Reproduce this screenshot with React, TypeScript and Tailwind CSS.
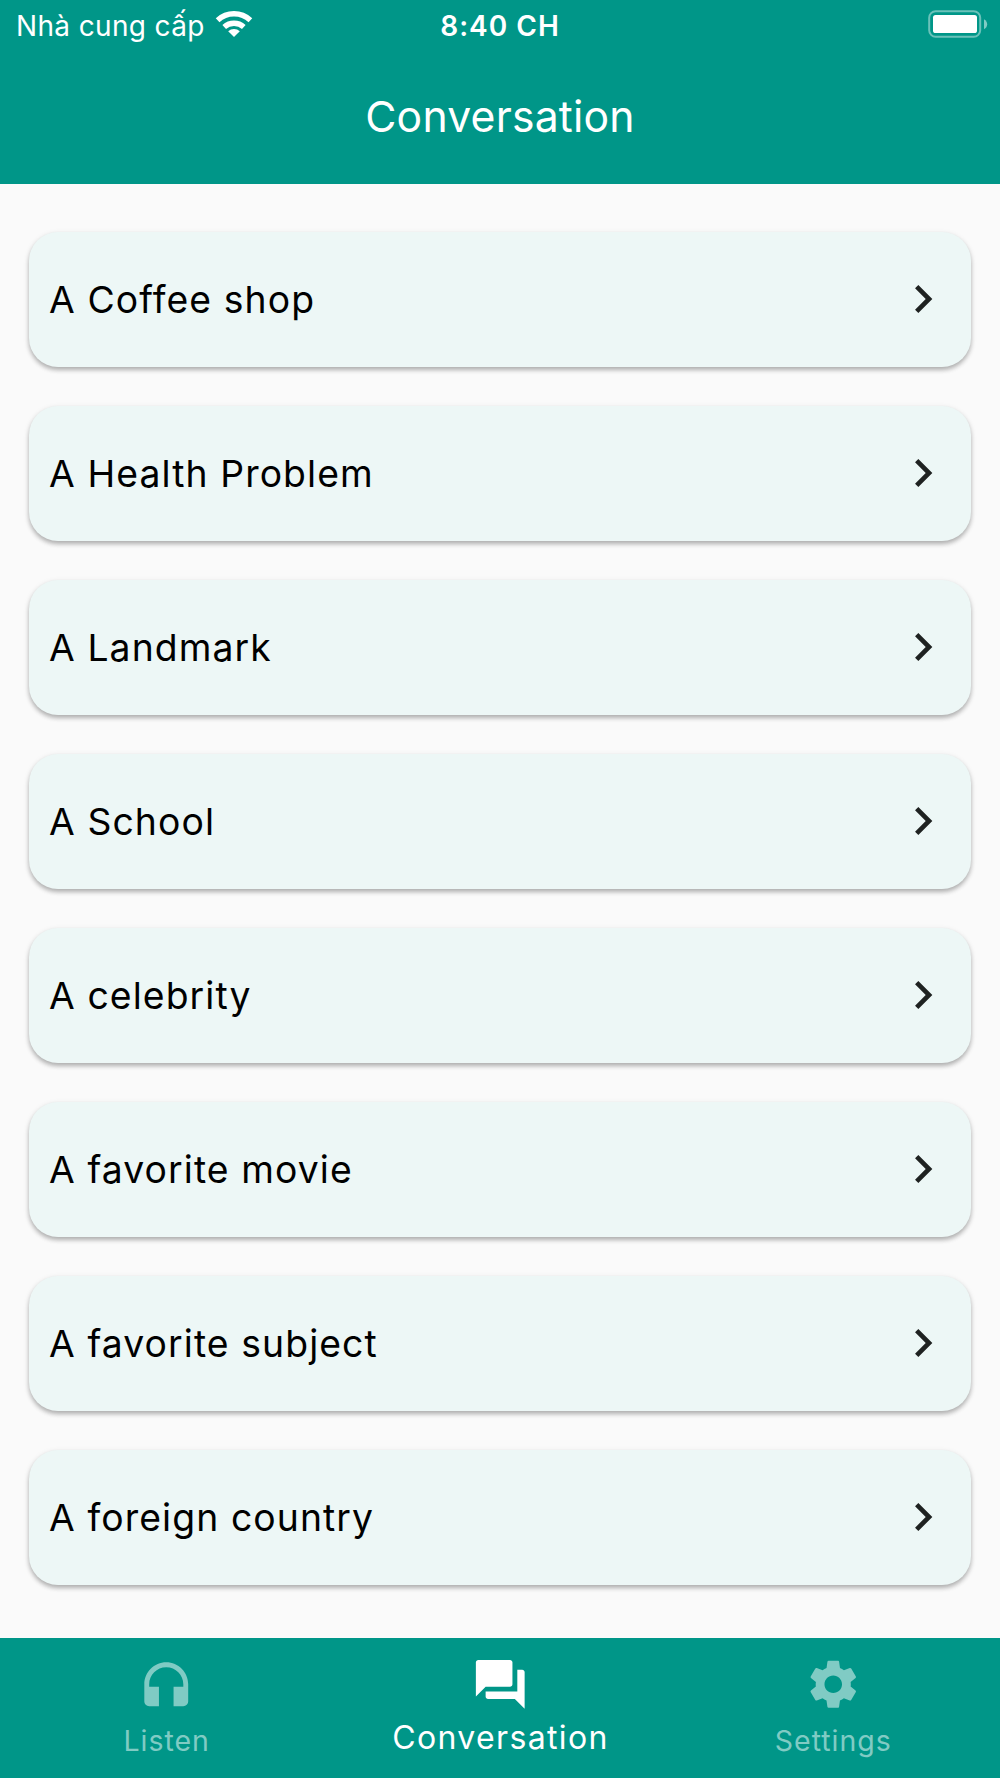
import React, { ReactNode } from "react";

interface Tab {
  label: string;
  active?: boolean;
  labelClass: string;
  icon: string;
}

const topics = [
  "A Coffee shop",
  "A Health Problem",
  "A Landmark",
  "A School",
  "A celebrity",
  "A favorite movie",
  "A favorite subject",
  "A foreign country",
];

const tabs: Tab[] = [
  {
    label: "Listen",
    labelClass: "text-[28.5px] tracking-[1px] pt-[6px]",
    icon: "M12 3c-4.97 0-9 4.03-9 9v7c0 1.1.9 2 2 2h4v-8H5v-1c0-3.87 3.13-7 7-7s7 3.13 7 7v1h-4v8h4c1.1 0 2-.9 2-2v-7c0-4.97-4.03-9-9-9z",
  },
  {
    label: "Conversation",
    active: true,
    labelClass: "text-[32px] tracking-[1.35px] pl-[1px]",
    icon: "M21 6h-2v9H6v2c0 .55.45 1 1 1h11l4 4V7c0-.55-.45-1-1-1zm-4 6V3c0-.55-.45-1-1-1H3c-.55 0-1 .45-1 1v14l4-4h10c.55 0 1-.45 1-1z",
  },
  {
    label: "Settings",
    labelClass: "text-[28.5px] tracking-[1px] pt-[6px]",
    icon: "M19.14 12.94c.04-.3.06-.61.06-.94 0-.32-.02-.64-.07-.94l2.03-1.58c.18-.14.23-.41.12-.61l-1.92-3.32c-.12-.22-.37-.29-.59-.22l-2.39.96c-.5-.38-1.03-.7-1.62-.94l-.36-2.54c-.04-.24-.24-.41-.48-.41h-3.84c-.24 0-.43.17-.47.41l-.36 2.54c-.59.24-1.13.57-1.62.94l-2.39-.96c-.22-.08-.47 0-.59.22L2.74 8.87c-.12.21-.08.47.12.61l2.03 1.58c-.05.3-.09.63-.09.94s.02.64.07.94l-2.03 1.58c-.18.14-.23.41-.12.61l1.92 3.32c.12.22.37.29.59.22l2.39-.96c.5.38 1.03.7 1.62.94l.36 2.54c.05.24.24.41.48.41h3.84c.24 0 .44-.17.47-.41l.36-2.54c.59-.24 1.13-.56 1.62-.94l2.39.96c.22.08.47 0 .59-.22l1.92-3.32c.12-.22.07-.47-.12-.61l-2.01-1.58zM12 15.6c-1.98 0-3.6-1.62-3.6-3.6s1.62-3.6 3.6-3.6 3.6 1.62 3.6 3.6-1.62 3.6-3.6 3.6z",
  },
];

const Icon = ({ path, className }: { path: string; className: string }) => (
  <svg
    xmlns="http://www.w3.org/2000/svg"
    className={className}
    viewBox="0 0 24 24"
    fill="currentColor"
  >
    <path d={path} />
  </svg>
);

const WifiIcon = () => (
  <svg
    className="w-[38px] h-[28px]"
    viewBox="0 0 38 28"
    fill="none"
    stroke="currentColor"
  >
    <path d="M2.6 10.2a24 24 0 0 1 32.8 0" strokeWidth={5.4} />
    <path d="M9.2 17a14.6 14.6 0 0 1 19.6 0" strokeWidth={5.4} />
    <path
      d="M13.2 21.2a8.6 8.6 0 0 1 11.6 0L19 27z"
      fill="currentColor"
      stroke="none"
    />
  </svg>
);

const BatteryIcon = () => (
  <svg className="w-[60px] h-[28px]" viewBox="0 0 60 28">
    <rect
      x="1.2"
      y="1.2"
      width="51"
      height="25.6"
      rx="6.5"
      fill="none"
      stroke="#fff"
      strokeOpacity="0.42"
      strokeWidth={2}
    />
    <rect x="5" y="5" width="44" height="18" rx="2.6" fill="#fff" />
    <path d="M56 9.2c4.2 2 4.2 8 0 10z" fill="#fff" fillOpacity="0.5" />
  </svg>
);

const StatusBar = ({ children }: { children: ReactNode }) => (
  <div className="h-12 grid grid-cols-[1fr_auto_1fr] items-center px-[12px]">
    {children}
  </div>
);

const TopicCard = ({ title }: { title: string }) => (
  <button className="w-full h-[135.5px] flex flex-none items-center justify-between pl-[20px] pr-[20.5px] rounded-[29px] bg-[#edf7f6] text-left cursor-pointer shadow-[0_3px_4px_rgba(0,0,0,0.24),0_2px_6px_rgba(0,0,0,0.1)]">
    <span className="text-[37.3px] leading-none font-[370] tracking-[1.1px] text-black">
      {title}
    </span>
    <Icon
      path="M10 6L8.59 7.41 13.17 12l-4.58 4.59L10 18l6-6z"
      className="w-14 h-14 text-[#1f2221]"
    />
  </button>
);

const App = () => {
  return (
    <div className="w-[1000px] h-[1778px] flex flex-col overflow-hidden bg-[#fafafa] font-['Inter',sans-serif]">
      <header className="h-[183.5px] flex-none bg-[#009688] text-white">
        <StatusBar>
          <div className="flex items-center space-x-[10px] pl-1">
            <span className="text-[28px] leading-none tracking-[0.35px] whitespace-nowrap pt-[3px]">
              Nhà cung cấp
            </span>
            <WifiIcon />
          </div>
          <div className="text-center text-[28px] leading-none font-semibold tracking-[1px] pt-[3px]">
            8:40 CH
          </div>
          <div className="flex justify-end">
            <BatteryIcon />
          </div>
        </StatusBar>
        <h1 className="pt-[48px] text-center text-[42.7px] leading-none tracking-[0.2px]">
          Conversation
        </h1>
      </header>
      <main className="flex-1 flex flex-col space-y-[38.5px] px-[29px] pt-[48.2px]">
        {topics.map((topic) => (
          <TopicCard key={topic} title={topic} />
        ))}
      </main>
      <nav className="h-[140.5px] flex-none grid grid-cols-3 bg-[#009688]">
        {tabs.map(({ label, active, labelClass, icon }) => (
          <div
            key={label}
            className={`flex flex-col items-center pt-[17px] ${
              active ? "text-white" : "text-[#80cbc4]"
            }`}
          >
            <Icon path={icon} className="w-[58.5px] h-[58.5px]" />
            <div className="h-[50px] flex items-center">
              <span className={`leading-none ${labelClass}`}>{label}</span>
            </div>
          </div>
        ))}
      </nav>
    </div>
  );
};

export default App;
